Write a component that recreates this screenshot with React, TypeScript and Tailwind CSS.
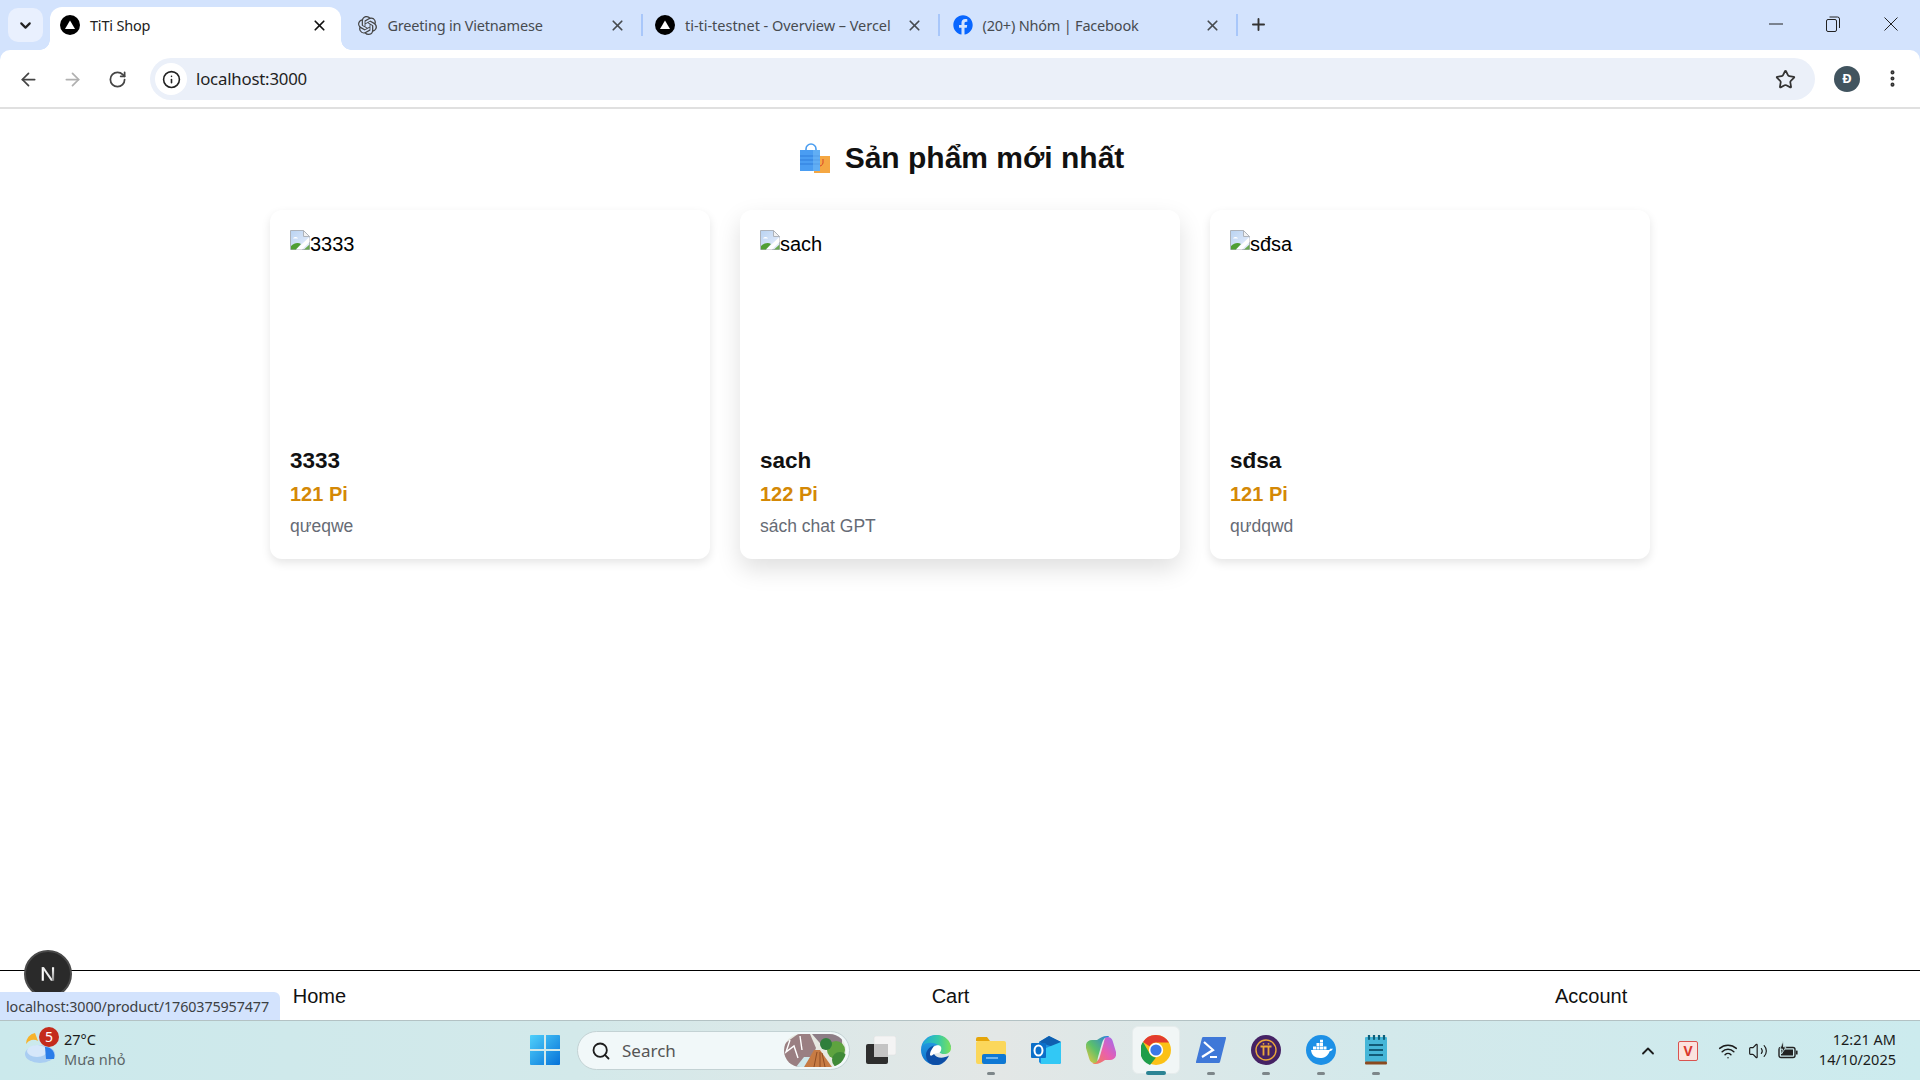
import React from "react";
import {
  ArrowLeft,
  ArrowRight,
  ChevronDown,
  ChevronUp,
  EllipsisVertical,
  Info,
  Plus,
  RotateCw,
  Search,
  Star,
  Volume2,
  Wifi,
  X,
} from "lucide-react";
import { FaFacebook } from "react-icons/fa";
import { SiOpenai } from "react-icons/si";

const products = [
  { name: "3333", price: "121 Pi", desc: "qưeqwe", hover: false },
  { name: "sach", price: "122 Pi", desc: "sách chat GPT", hover: true },
  { name: "sđsa", price: "121 Pi", desc: "qưdqwd", hover: false },
];

const VercelIcon = () => (
  <svg viewBox="0 0 20 20" className="w-5 h-5">
    <circle cx="10" cy="10" r="10" fill="#000" />
    <path d="M10 5.5 15 14H5z" fill="#fff" />
  </svg>
);

const BrokenImage = () => (
  <svg viewBox="0 0 20 20" className="w-5 h-5 shrink-0">
    <defs>
      <linearGradient id="sky" x1="0" y1="0" x2="1" y2="1">
        <stop offset="0" stopColor="#b9d3f2" />
        <stop offset="1" stopColor="#e8eefb" />
      </linearGradient>
    </defs>
    <path d="M.5.5h13l6 6v13H.5z" fill="url(#sky)" stroke="#aeb3ba" />
    <path d="M13.500.5v6h6z" fill="#f2f2f2" stroke="#aeb3ba" />
    <path d="M3 8.500c1-2 4-2 5 0z" fill="#fff" />
    <path d="M1 19.500V16c3-3 7-4 10-2l-5 5.500z" fill="#4f9e33" />
    <path d="M6 19.500 19.500 7v5L12 19.500z" fill="#fff" />
    <path d="M14 19.500l5.500-5v5z" fill="#6aa84f" />
  </svg>
);

const BagEmoji = () => (
  <svg viewBox="0 0 31 31" className="w-[31px] h-[31px] shrink-0">
    <rect x="15" y="13" width="16" height="17" fill="#f5a742" />
    <path d="M24 16v4a4 4 0 0 1-5 3" fill="none" stroke="#d9452b" strokeWidth="1" />
    <path d="M7 9V6a5 5 0 0 1 10 0v3" fill="none" stroke="#4a9df0" strokeWidth="1.6" />
    <rect x="1" y="7" width="20" height="21" fill="#4a9df2" />
    <path d="M1 13h20M1 17h20M1 21h20" stroke="#2f7fdc" strokeWidth="1.2" />
    <rect x="14" y="7" width="7" height="21" fill="#7fc3f7" opacity=".45" />
  </svg>
);

const ProductCard = ({ name, price, desc, hover }: (typeof products)[number]) => (
  <div
    className={`flex flex-col bg-white rounded-[12px] px-5 pt-5 pb-[23px] ${
      hover
        ? "shadow-[0_10px_24px_rgba(0,0,0,0.13)]"
        : "shadow-[0_4px_10px_rgba(0,0,0,0.1)]"
    }`}
  >
    <div className="h-[200px] flex items-start text-[20px] leading-[28px] text-black">
      <BrokenImage />
      <span>{name}</span>
    </div>
    <h3 className="mt-[18px] text-[22.5px] leading-[26px] font-bold text-[#111]">{name}</h3>
    <p className="mt-[9px] text-[20px] leading-[23px] font-bold text-[#d48806]">{price}</p>
    <p className="mt-[10px] text-[17.5px] leading-[20px] text-[#666b75]">{desc}</p>
  </div>
);

const Tab = ({
  icon,
  title,
  active,
  separator,
  wide,
}: {
  icon: React.ReactNode;
  title: string;
  active?: boolean;
  separator?: boolean;
  wide?: boolean;
}) => (
  <div className="relative w-[297.5px] h-[50px] shrink-0 flex items-end">
    <div
      className={`relative w-[291px] flex items-center pl-[10px] h-[43px] pb-[7px] ${
        active ? "bg-white rounded-t-[12px]" : ""
      }`}
    >
      {active && (
        <>
          <span className="absolute -left-[10px] bottom-0 w-[10px] h-[10px] bg-[radial-gradient(circle_at_0_0,transparent_9.5px,#fff_10px)]" />
          <span className="absolute -right-[10px] bottom-0 w-[10px] h-[10px] bg-[radial-gradient(circle_at_100%_0,transparent_9.5px,#fff_10px)]" />
        </>
      )}
      <span className="w-5 h-5 flex items-center justify-center shrink-0">{icon}</span>
      <span
        className={`ml-[10px] flex-1 text-[14.5px] leading-5 whitespace-nowrap ${
          wide ? "tracking-[-0.03px]" : "tracking-[-0.2px]"
        } ${active ? "text-[#222]" : "text-[#474b50]"}`}
      >
        {title}
      </span>
      <X className={`w-[17px] h-[17px] mr-[13px] ${active ? "text-[#111]" : "text-[#474b50]"}`} strokeWidth={2.4} />
    </div>
    {separator && <span className="absolute left-[293px] top-[14px] w-[2px] h-[22px] bg-[#a8c7fa]" />}
  </div>
);

const WindowButtons = () => (
  <div className="flex items-center h-[50px] pb-[2px] text-[#222]">
    <span className="w-[56px] flex justify-center">
      <svg viewBox="0 0 14 2" className="w-[14px] h-[2px]"><path d="M0 1h14" stroke="#222" strokeWidth="1" /></svg>
    </span>
    <span className="w-[58px] flex justify-center">
      <svg viewBox="0 0 14 16" className="w-[14px] h-4" fill="none" stroke="#222" strokeWidth="1">
        <rect x=".5" y="3.500" width="10" height="12" rx="1.5" />
        <path d="M3.500 1h8a2 2 0 0 1 2 2v9" />
      </svg>
    </span>
    <span className="w-[58px] flex justify-center">
      <svg viewBox="0 0 14 14" className="w-[14px] h-[14px]"><path d="M.5.5l13 13M13.500.5l-13 13" stroke="#222" strokeWidth="1" /></svg>
    </span>
  </div>
);

const BrowserChrome = () => (
  <div className="bg-[#d3e3fd] font-['Noto_Sans',sans-serif]">
    <div className="flex h-[50px]">
      <div className="w-[50px] shrink-0 pl-2 pt-2">
        <div className="w-[35px] h-[34px] rounded-[10px] bg-[#e9f0fe] flex items-center justify-center">
          <ChevronDown className="w-[17px] h-[17px] text-[#222]" strokeWidth={3} />
        </div>
      </div>
      <Tab active icon={<VercelIcon />} title="TiTi Shop" />
      <Tab icon={<SiOpenai className="w-[19px] h-[19px] text-[#444]" />} title="Greeting in Vietnamese" separator />
      <Tab icon={<VercelIcon />} title="ti-ti-testnet - Overview – Vercel" separator wide />
      <Tab icon={<FaFacebook className="w-5 h-5 text-[#0866ff]" />} title="(20+) Nhóm | Facebook" separator />
      <div className="w-[36px] flex items-center justify-center pb-[1px]">
        <Plus className="w-[19px] h-[19px] text-[#333]" strokeWidth={2.4} />
      </div>
      <div className="flex-1" />
      <WindowButtons />
    </div>

    <div className="h-[59px] bg-white rounded-t-[10px] border-b-[2px] border-[#e0e0e0] flex items-start pt-[8px]">
      <div className="w-[150px] h-[42px] flex items-center shrink-0 text-[#444]">
        <span className="w-[56px] flex justify-center"><ArrowLeft className="w-[21px] h-[21px]" strokeWidth={2} /></span>
        <span className="w-[33px] flex justify-center"><ArrowRight className="w-[21px] h-[21px] text-[#b0b0b0]" strokeWidth={2} /></span>
        <span className="w-[57px] flex justify-center"><RotateCw className="w-[19px] h-[19px]" strokeWidth={2.2} /></span>
      </div>
      <div className="w-[1665px] h-[42px] rounded-full bg-[#ebf0f9] flex items-center pl-[5px] pr-[19px]">
        <span className="w-[32px] h-[32px] rounded-full bg-white flex items-center justify-center">
          <Info className="w-[19px] h-[19px] text-[#222]" strokeWidth={2} />
        </span>
        <span className="ml-[9px] flex-1 text-[16.8px] tracking-[-0.2px] text-[#1f1f1f]">localhost:3000</span>
        <Star className="w-[21px] h-[21px] text-[#333]" strokeWidth={2} />
      </div>
      <div className="ml-[19px] mt-[8px] w-[26px] h-[26px] rounded-full bg-[#41545f] flex items-center justify-center text-[13px] font-bold text-white">
        Đ
      </div>
      <EllipsisVertical className="ml-[22px] mt-[10px] w-[21px] h-[21px] text-[#333]" strokeWidth={2.6} />
    </div>
  </div>
);

const NextBadge = () => (
  <div className="absolute left-[24px] top-[950px] w-[48px] h-[48px] rounded-full bg-[#2a2a2a] border-2 border-[#4a4a4a] flex items-center justify-center z-10">
    <svg viewBox="0 0 20 20" className="w-[18px] h-[18px]">
      <defs>
        <linearGradient id="nFade" x1="0" y1="0" x2="0" y2="1">
          <stop offset="0" stopColor="#fff" />
          <stop offset="1" stopColor="#888" />
        </linearGradient>
      </defs>
      <path d="M3 2.500h2.400v15H3z" fill="#fff" />
      <path d="M3 2.500h2.600L16 17.500h-2.800z" fill="#eee" />
      <path d="M14.400 2.500h2.400v15h-2.400z" fill="url(#nFade)" />
    </svg>
  </div>
);

const StatusBubble = () => (
  <div className="absolute left-0 top-[992px] w-[280px] h-[28px] rounded-tr-[6px] bg-[#d3e3fd] pl-[6px] pt-[2px] flex items-center text-[14.3px] text-[#3c4043] font-['Noto_Sans',sans-serif] tracking-[-0.1px] whitespace-nowrap z-20">
    localhost:3000/product/1760375957477
  </div>
);

const WeatherIcon = () => (
  <div className="relative w-[40px] h-[40px]">
    <svg viewBox="0 0 32 36" className="absolute left-0 top-0 w-[32px] h-[36px]">
      <path d="M10 4 A11 11 0 0 0 1 15 A9 9 0 0 1 13 12z" fill="#f7b32b" />
      <ellipse cx="15" cy="25" rx="15" ry="9" fill="#a9cdf2" />
      <ellipse cx="12" cy="22" rx="10" ry="6" fill="#d6e7fa" />
      <path d="M20 18a9 9 0 0 1 9 12h-8z" fill="#2b7de9" />
    </svg>
    <span className="absolute left-[14px] top-[-2px] w-5 h-5 rounded-full bg-[#c42b1c] text-white text-[14px] leading-5 text-center">5</span>
  </div>
);

const WinLogo = () => (
  <svg viewBox="0 0 30 30" className="w-[30px] h-[30px]">
    <defs>
      <linearGradient id="win" x1="0" y1="0" x2="1" y2="1">
        <stop offset="0" stopColor="#4fd0fb" />
        <stop offset="1" stopColor="#0672d8" />
      </linearGradient>
    </defs>
    <path d="M0 1a1 1 0 0 1 1-1h13v14H0zM16 0h13a1 1 0 0 1 1 1v13H16zM0 16h14v14H1a1 1 0 0 1-1-1zM16 16h14v13a1 1 0 0 1-1 1H16z" fill="url(#win)" />
  </svg>
);

const SearchArt = () => (
  <svg viewBox="0 0 62 33" className="w-[62px] h-[33px]">
    <defs>
      <clipPath id="pill"><rect width="62" height="33" rx="16.5" /></clipPath>
    </defs>
    <g clipPath="url(#pill)">
      <rect width="62" height="33" fill="#e7e9e2" />
      <path d="M0 33V10L14 0h12l6 14-8 19z" fill="#9a7f82" />
      <path d="M6 6 2 18l8-6 4 12M16 2l2 14" stroke="#fff" strokeWidth="1.4" fill="none" />
      <path d="M28 0h30v10l-16 6z" fill="#8d7d86" />
      <circle cx="52" cy="16" r="9" fill="#5ea33f" />
      <circle cx="42" cy="10" r="6" fill="#2f7f3c" />
      <circle cx="56" cy="26" r="8" fill="#3f8a38" />
      <path d="M20 33l10-17h6l12 17z" fill="#c77b43" />
      <path d="M30 33l3-15M36 33l0-15M41 33l-3-14" stroke="#8f4d24" strokeWidth="1" />
      <path d="M12 33l8-10 6 0-6 10z" fill="#cfe7ea" />
    </g>
  </svg>
);

const TaskView = () => (
  <svg viewBox="0 0 30 28" className="w-[30px] h-[28px]">
    <rect x="8" y="0" width="22" height="19" rx="2" fill="#f4f4f4" stroke="#dcdcdc" strokeWidth=".5" />
    <rect x="0" y="8" width="22" height="20" rx="2" fill="#2e2e2e" />
    <rect x="8" y="8" width="14" height="13" fill="#c4c4c4" />
  </svg>
);

const EdgeIcon = () => (
  <svg viewBox="0 0 30 30" className="w-[30px] h-[30px]">
    <defs>
      <linearGradient id="edgeA" x1="0" y1="0" x2="0" y2="1">
        <stop offset="0" stopColor="#2aa5e6" />
        <stop offset="1" stopColor="#0c6fcb" />
      </linearGradient>
      <linearGradient id="edgeB" x1="0" y1="0" x2="1" y2="0">
        <stop offset="0" stopColor="#1fa8d8" />
        <stop offset=".55" stopColor="#35c9a8" />
        <stop offset="1" stopColor="#7be05a" />
      </linearGradient>
    </defs>
    {/* blue body */}
    <path d="M15 0C7 0 0 6 0 15c0 8 6 15 15 15 3 0 5-.6 7-2-6 1-12-2-13-8-1-5 3-10 9-10L30 12C28 5 22 0 15 0z" fill="url(#edgeA)" />
    {/* green top */}
    <path d="M1 11C4 4 10 0 16 0c8 0 14 6 14 13 0 4-3 6-7 6-2 0-4-.6-4.500-1.500 1.500-1 2.500-5-1.500-7.500C12 7 5 7 1 11z" fill="url(#edgeB)" />
    {/* dark swirl */}
    <path d="M13 19c2 4 9 5 15 1.500-2 5-7 9.500-13 9.500-7 0-10-5-10-10 0-4 3-8 8-9.500-2 2-2 5.500 0 8.500z" fill="#0d4ea6" />
    <path d="M9 20c0-5 4-10 9-9.500 3 .3 3 5 .5 7-1.500 1-3.500.5-5.500 1.500-1 .5-3 3-4 1z" fill="#fff" />
  </svg>
);

const FolderIcon = () => (
  <svg viewBox="0 0 30 28" className="w-[30px] h-[28px]">
    <path d="M0 3a2 2 0 0 1 2-2h9l3 4H0z" fill="#e5a50a" />
    <rect x="0" y="5" width="30" height="23" rx="2" fill="#fbd75b" />
    <rect x="6" y="18" width="24" height="10" rx="2" fill="#0f78d4" />
    <path d="M10 22h12" stroke="#9bd0f5" strokeWidth="1.4" />
  </svg>
);

const OutlookIcon = () => (
  <svg viewBox="0 0 30 28" className="w-[30px] h-[28px]">
    <path d="M8 6 18 0l12 6v20a2 2 0 0 1-2 2H10l-2-2z" fill="#1a8ce0" />
    <path d="M18 0l12 6-8 5-14-5z" fill="#0f5fb0" />
    <path d="M10 28V14l20-8v20a2 2 0 0 1-2 2z" fill="#32c8f5" />
    <rect x="0" y="7" width="15" height="15" rx="1" fill="#0b6fc9" />
    <ellipse cx="7.5" cy="14.5" rx="4" ry="5" fill="none" stroke="#fff" strokeWidth="2" />
  </svg>
);

const CopilotIcon = () => (
  <svg viewBox="0 0 30 28" className="w-[30px] h-[28px]">
    <defs>
      <linearGradient id="copA" x1="0" y1="1" x2="1" y2="0">
        <stop offset="0" stopColor="#f2c83c" />
        <stop offset=".45" stopColor="#5cc06a" />
        <stop offset="1" stopColor="#2a7de1" />
      </linearGradient>
      <linearGradient id="copB" x1="1" y1="0" x2="0" y2="1">
        <stop offset="0" stopColor="#9a6cf4" />
        <stop offset=".5" stopColor="#e85fb0" />
        <stop offset="1" stopColor="#f5824a" />
      </linearGradient>
    </defs>
    <path d="M21 1c3 0 5 1 6 5l3 10c1 5-2 8-6 8h-5c-3 2-6 4-10 4-3 0-3-2-1-2 3 0 5-2 6-6l4-14c.5-3 1-5 3-5z" fill="url(#copB)" />
    <path d="M9 27c-3 0-5-1-6-5L0 12C-1 7 2 4 6 4h5c3-2 6-4 10-4 2 0 3 1 1 1-3 0-5 2-6 6l-4 14c-.5 3-1 6-3 6z" fill="url(#copA)" />
  </svg>
);

const ChromeIcon = () => (
  <svg viewBox="0 0 30 30" className="w-[30px] h-[30px]">
    <circle cx="15" cy="15" r="15" fill="#fbc116" />
    <path d="M15 0a15 15 0 0 1 13 7.500H15a7.500 7.500 0 0 0-6.500 3.800L2 7a15 15 0 0 1 13-7z" fill="#e33b2e" />
    <path d="M2 7l6.500 11.300A7.500 7.500 0 0 0 15 22.500L9 30A15 15 0 0 1 2 7z" fill="#1f9e4a" />
    <circle cx="15" cy="15" r="7.200" fill="#fff" />
    <circle cx="15" cy="15" r="5.600" fill="#3b78e7" />
  </svg>
);

const PowerShellIcon = () => (
  <svg viewBox="0 0 30 26" className="w-[30px] h-[26px]">
    <path d="M6 1a1.500 1.500 0 0 1 1.500-1H29a1 1 0 0 1 1 1.300L24 25a1.500 1.500 0 0 1-1.500 1H1a1 1 0 0 1-1-1.300z" fill="#3f78d8" />
    <path d="M8 5l9 8-11 7" stroke="#fff" strokeWidth="2.2" fill="none" />
    <path d="M14 20h7" stroke="#fff" strokeWidth="2" />
  </svg>
);

const PiIcon = () => (
  <svg viewBox="0 0 30 30" className="w-[30px] h-[30px]">
    <circle cx="15" cy="15" r="15" fill="#452264" />
    <circle cx="15" cy="15" r="10" fill="none" stroke="#eba83a" strokeWidth="1.4" />
    <path d="M9.500 11.500h11M12.500 11.500v9M17.500 11.500v9" stroke="#eba83a" strokeWidth="1.8" />
    <circle cx="12.500" cy="8.800" r=".9" fill="#eba83a" />
    <circle cx="17.500" cy="8.800" r=".9" fill="#eba83a" />
  </svg>
);

const DockerIcon = () => (
  <svg viewBox="0 0 30 30" className="w-[30px] h-[30px]">
    <circle cx="15" cy="15" r="15" fill="#1d90e6" />
    <path d="M5 15h17c1 0 2-.6 2.600-1.600.8.3 1.600.3 2.400 0-.6 1.600-2 2.600-3.400 2.800C22 21 18.500 23 14 23c-5 0-8.500-2.800-9-8z" fill="#fff" />
    <path d="M7 11.500h3v3H7zM10.500 11.500h3v3h-3zM14 11.500h3v3h-3zM17.500 11.500h3v3h-3zM10.500 8h3v3h-3zM14 8h3v3h-3zM14 4.800h3v2.800h-3z" fill="#fff" />
  </svg>
);

const NotepadIcon = () => (
  <svg viewBox="0 0 22 30" className="w-[22px] h-[30px]">
    <rect x="0" y="2" width="22" height="25" rx="1" fill="#46b6d8" />
    <rect x="0" y="26.500" width="22" height="3" rx="1" fill="#8a4a20" />
    <path d="M4 0v4M9 0v4M14 0v4M19 0v4" stroke="#0d5f7a" strokeWidth="2.2" strokeLinecap="round" />
    <path d="M4 10h14M4 15h14M4 20h14" stroke="#125b78" strokeWidth="1.8" />
  </svg>
);

const BatteryIcon = () => (
  <svg viewBox="0 0 20 20" className="w-5 h-5">
    <rect x="1" y="6.500" width="16" height="10" rx="2" fill="none" stroke="#222" strokeWidth="1.4" />
    <rect x="3" y="8.500" width="12" height="6" fill="#222" />
    <rect x="18" y="9.500" width="1.600" height="4" rx=".5" fill="#222" />
    <path d="M5 0 2 8h2.500L3.500 13 8 6H5.500z" fill="#222" stroke="#cdebee" strokeWidth=".8" />
  </svg>
);

const TaskIcon = ({
  children,
  dot,
  active,
}: {
  children: React.ReactNode;
  dot?: boolean;
  active?: boolean;
}) => (
  <div className="relative w-[55px] h-[60px] flex items-center justify-center pb-[2px]">
    {active && <span className="absolute left-[4px] top-[5px] w-[48px] h-[48px] rounded-[6px] bg-[#f1f6f6] border border-[#e6ecec]" />}
    <span className="relative flex">{children}</span>
    {dot && <span className="absolute left-[24px] bottom-[6px] w-[8px] h-[3px] rounded-full bg-[#7d8689]" />}
    {active && <span className="absolute left-[18px] bottom-[6px] w-[20px] h-[4px] rounded-full bg-[#2c8494]" />}
  </div>
);

const Taskbar = () => (
  <div className="h-[60px] shrink-0 border-t border-[#b3c2c4] bg-[linear-gradient(to_right,#cbe9ec_0%,#d3e9ea_30%,#e3e7e6_52%,#d3e9eb_72%,#ccebee_100%)] flex items-center font-['Noto_Sans',sans-serif]">
    <div className="w-[517px] shrink-0 flex items-center pl-[25px] pb-[3px]">
      <WeatherIcon />
      <div className="-ml-[1px] flex flex-col">
        <span className="text-[14.5px] leading-5 text-[#1b1b1b]">27°C</span>
        <span className="text-[14.5px] leading-5 text-[#5c6668]">Mưa nhỏ</span>
      </div>
    </div>

    <TaskIcon><WinLogo /></TaskIcon>
    <div className="ml-[5px] w-[273px] h-[39px] rounded-full bg-[#f1f8f9] border border-[#c3d2d4] flex items-center pl-[13px] pr-[3px]">
      <Search className="w-[20px] h-[20px] text-[#1c1c1c]" strokeWidth={2.2} />
      <span className="ml-[11px] flex-1 text-[17px] text-[#555]">Search</span>
      <SearchArt />
    </div>
    <div className="ml-[3px] flex">
      <TaskIcon><TaskView /></TaskIcon>
      <TaskIcon><EdgeIcon /></TaskIcon>
      <TaskIcon dot><FolderIcon /></TaskIcon>
      <TaskIcon><OutlookIcon /></TaskIcon>
      <TaskIcon><CopilotIcon /></TaskIcon>
      <TaskIcon active><ChromeIcon /></TaskIcon>
      <TaskIcon dot><PowerShellIcon /></TaskIcon>
      <TaskIcon dot><PiIcon /></TaskIcon>
      <TaskIcon dot><DockerIcon /></TaskIcon>
      <TaskIcon dot><NotepadIcon /></TaskIcon>
    </div>

    <div className="flex-1 flex items-center justify-end pr-[24px]">
      <ChevronUp className="w-[20px] h-[20px] text-[#1c1c1c]" strokeWidth={2.2} />
      <span className="ml-[20px] w-[20px] h-[20px] rounded-[2px] bg-[#fbe3df] border border-[#d9534f] flex items-center justify-center text-[14px] font-bold leading-none text-[#d9382e]">
        V
      </span>
      <Wifi className="ml-[20px] w-[20px] h-[20px] text-[#1c1c1c]" strokeWidth={1.8} />
      <Volume2 className="ml-[10px] w-[20px] h-[20px] text-[#1c1c1c]" strokeWidth={1.4} />
      <span className="ml-[10px] flex"><BatteryIcon /></span>
      <div className="ml-[20px] w-[78px] pb-[3px] flex flex-col items-end text-[14.5px] leading-5 text-[#1b1b1b] whitespace-nowrap">
        <span>12:21 AM</span>
        <span>14/10/2025</span>
      </div>
    </div>
  </div>
);

export default function App() {
  return (
    <div className="relative w-[1920px] h-screen flex flex-col overflow-hidden bg-white font-['Liberation_Sans',Arial,sans-serif]">
      <BrowserChrome />

      <main className="flex-1 flex flex-col min-h-0">
        {/* Heading */}
        <h1 className="mt-[29px] pl-[3px] flex items-center justify-center gap-[15px] text-[30px] leading-[40px] font-bold text-[#111]">
          <BagEmoji />
          <span>Sản phẩm mới nhất</span>
        </h1>

        {/* Product grid */}
        <div className="mt-[32px] mx-auto w-[1380px] grid grid-cols-3 gap-[30px]">
          {products.map((p) => (
            <ProductCard key={p.name} {...p} />
          ))}
        </div>

        {/* Bottom nav */}
        <footer className="mt-auto h-[50px] border-t border-black flex items-center justify-around text-[20px] text-[#111]">
          <span>Home</span>
          <span>Cart</span>
          <span>Account</span>
        </footer>
      </main>

      <Taskbar />
      <NextBadge />
      <StatusBubble />
    </div>
  );
}
